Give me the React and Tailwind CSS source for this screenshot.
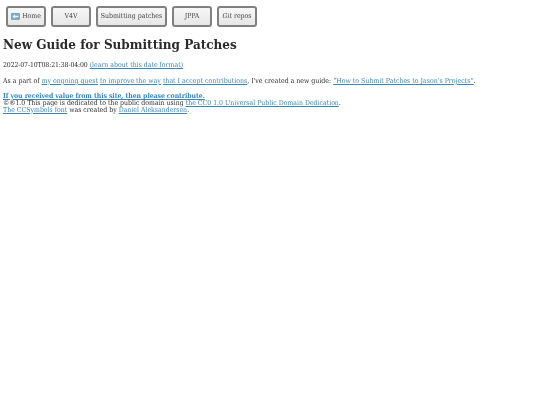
const links = [
  { label: "Home", w: "w-[40px]", icon: true },
  { label: "V4V", w: "w-[40px]" },
  { label: "Submitting patches", w: "w-[71px]" },
  { label: "JPPA", w: "w-[40px]" },
  { label: "repos", w: "w-[40px]", git: true },
];

function NavButton({ item }) {
  return (
    <a className={`${item.w} h-[21px] flex items-center justify-center gap-[2px] border-2 border-[#808080] rounded-[3px] bg-gradient-to-b from-[#f7f7f7] to-[#e6e6e6] text-[6.9px] text-[#444444]`}>
      {item.icon && (
        <svg width="9" height="7" viewBox="0 0 9 7">
          <rect width="9" height="7" rx="1" fill="#7aa9c9" />
          <path d="M1.5 3.5 L4 1.3 V2.7 H7.5 V4.3 H4 V5.7 Z" fill="#eef4f8" />
        </svg>
      )}
      {item.git && <i>Git</i>}
      <span>{item.label}</span>
    </a>
  );
}

function Link({ children, className = "" }) {
  return <a className={`text-[#3a85b5] underline ${className}`}>{children}</a>;
}

export default function App() {
  return (
    <div className="min-h-screen bg-white px-[3px] pt-[6px] font-['DejaVu_Serif_Condensed','DejaVu_Serif','Liberation_Serif',serif] text-[#2b2b2b] blur-[0.3px]">
      <nav className="flex gap-[5px] pl-[3px]">
        {links.map((item) => (
          <NavButton key={item.label} item={item} />
        ))}
      </nav>
      <h1 className="mt-[7px] text-[13.4px] leading-[20px] font-bold">New Guide for Submitting Patches</h1>
      <p className="mt-[7px] text-[6.9px] leading-[9px]">
        <span className="tracking-[-0.12px]">2022-07-10T08:21:38-04:00</span>{" "}
        <Link>(learn about this date format)</Link>
      </p>
      <p className="mt-[7px] text-[6.95px] leading-[9px]">
        As a part of <Link>my ongoing quest</Link> <Link>to improve the way</Link>{" "}
        <Link>that I accept contributions</Link>, I've created a new guide:{" "}
        <Link>“How to Submit Patches to Jason's Projects”</Link>.
      </p>
      <footer className="mt-[7px] text-[6.9px]">
        <p className="leading-[6.5px]">
          <Link className="font-bold tracking-[-0.07px]">If you received value from this site, then please contribute.</Link>
        </p>
        <p className="leading-[7px]">
          ©®1.0 This page is dedicated to the public domain using{" "}
          <Link>the CC0 1.0 Universal Public Domain Dedication</Link>.
        </p>
        <p className="leading-[7px]">
          <Link>The CCSymbols font</Link> was created by <Link>Daniel Aleksandersen</Link>.
        </p>
      </footer>
    </div>
  );
}
